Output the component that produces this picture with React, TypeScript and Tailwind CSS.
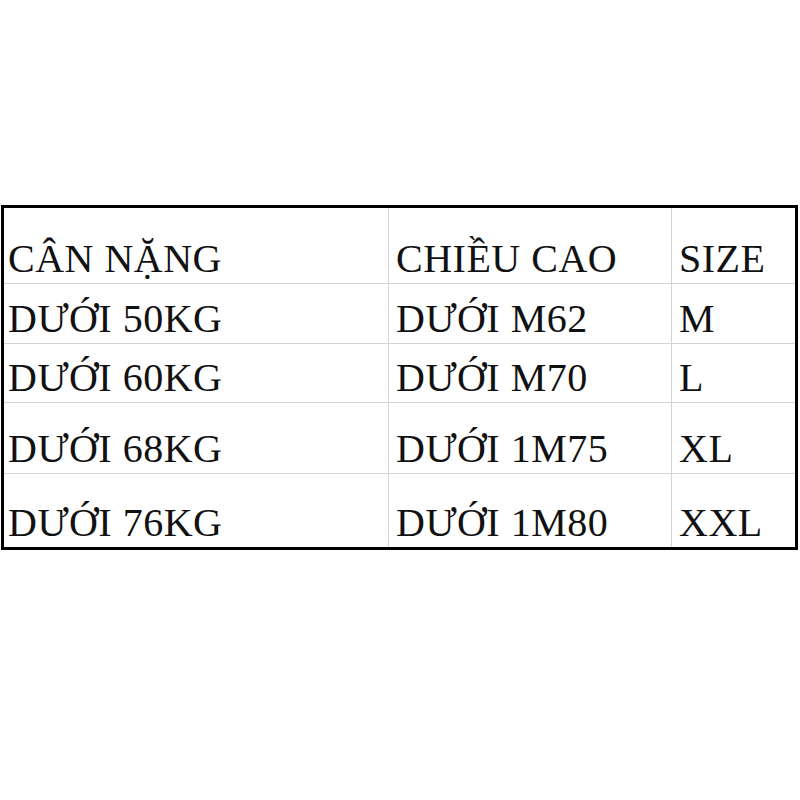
const rows = [
  { h: "h-[76px]", cells: ["CÂN NẶNG", "CHIỀU CAO", "SIZE"] },
  { h: "h-[60px]", cells: ["DƯỚI 50KG", "DƯỚI M62", "M"] },
  { h: "h-[59px]", cells: ["DƯỚI 60KG", "DƯỚI M70", "L"] },
  { h: "h-[71px]", cells: ["DƯỚI 68KG", "DƯỚI 1M75", "XL"] },
  { h: "h-[73px]", cells: ["DƯỚI 76KG", "DƯỚI 1M80", "XXL"] },
];

export default function App() {
  return (
    <div className="w-[800px] h-[800px] bg-white pt-[205px] pl-[1px]">
      <div
        className="w-[797px] border-[3px] border-black text-[#111]"
        style={{ fontFamily: '"Liberation Serif", "Times New Roman", serif' }}
      >
        {rows.map((row, i) => {
          const last = i === rows.length - 1;
          return (
            <div key={i} className={`grid grid-cols-[385px_283px_123px] ${row.h}`}>
              {row.cells.map((c, j) => (
                <div
                  key={j}
                  className={`flex items-end text-[40px] leading-none tracking-[0.5px] pb-[4px] whitespace-nowrap ${
                    last ? "" : "border-b border-[#d4d4d4]"
                  } ${j < 2 ? "border-r border-r-[#d4d4d4]" : ""} ${j === 0 ? "pl-[4px]" : "pl-[7px]"}`}
                >
                  {c}
                </div>
              ))}
            </div>
          );
        })}
      </div>
    </div>
  );
}
